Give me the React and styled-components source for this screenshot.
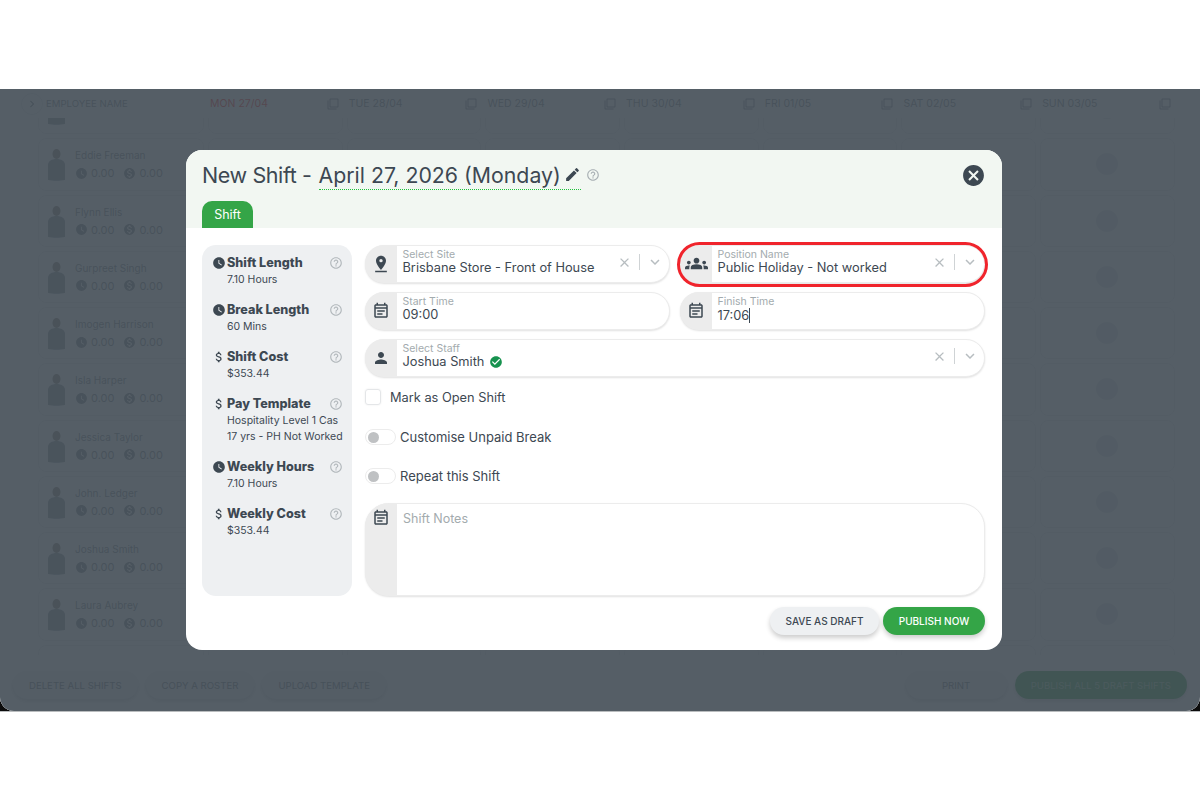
import React from "react";
import styled, { createGlobalStyle } from "styled-components";
import {
  MdAttachMoney,
  MdCancel,
  MdCheckCircle,
  MdClose,
  MdEdit,
  MdGroups,
  MdHelpOutline,
  MdKeyboardArrowDown,
  MdKeyboardArrowRight,
  MdMonetizationOn,
  MdOutlineEventNote,
  MdOutlineFilterNone,
  MdPerson,
  MdPinDrop,
  MdWatchLater,
} from "react-icons/md";

const GlobalStyle = createGlobalStyle`
  html, body {
    margin: 0;
    padding: 0;
    background: #fff;
  }
  * {
    box-sizing: border-box;
  }
  body {
    font-family: "Inter", "Noto Sans", "Liberation Sans", sans-serif;
    color: #3d4852;
  }
`;

const Page = styled.div`
  width: 1200px;
  height: 800px;
  padding-top: 89px;
  overflow: hidden;
`;
const Shell = styled.div`
  height: 623px;
  background: #0c0c0c;
  border-bottom: 1px solid #b9bcbe;
`;
const Screen = styled.div`
  position: relative;
  height: 622px;
  background: #fff;
  border-radius: 0 0 14px 14px;
  overflow: hidden;
  display: flex;
  flex-direction: column;
`;

const HeadRow = styled.div`
  height: 29px;
  flex: none;
  display: flex;
  align-items: center;
  padding-left: 21px;
  font-size: 10.5px;
  color: #7c848b;
`;
const Collapse = styled.div`
  width: 22px;
  height: 22px;
  margin-right: 3px;
  border-radius: 50%;
  border: 1px solid #e4e6e8;
  display: flex;
  align-items: center;
  justify-content: center;
  font-size: 14px;
`;
const NameHead = styled.div`
  width: 164px;
  font-size: 9.6px;
`;
const DayHead = styled.div`
  width: 138.7px;
  padding-right: 10px;
  display: flex;
  align-items: center;
  justify-content: space-between;
  color: ${(p) => (p.$today ? "#ff1a1a" : "#7c848b")};
  svg {
    font-size: 12px;
    color: #7c848b;
  }
`;

const Scroller = styled.div`
  flex: 1;
  overflow: hidden;
  padding-left: 38px;
`;
const RowList = styled.div`
  display: flex;
  flex-direction: column;
  gap: 4px;
  margin-top: -36px;
`;
const Row = styled.div`
  display: flex;
  gap: 4px;
  height: 52.25px;
  flex: none;
`;
const Card = styled.div`
  width: 166px;
  flex: none;
  border: 1px solid #e8eaec;
  border-radius: 8px;
  display: flex;
  align-items: center;
  padding-left: 3px;
  gap: 4px;
  color: #7c848b;
`;
const Cell = styled.div`
  width: 134.7px;
  flex: none;
  border: 1px solid #e8eaec;
  border-radius: 8px;
  display: flex;
  align-items: center;
  justify-content: center;
`;
const AddDot = styled.span`
  width: 22px;
  height: 22px;
  border-radius: 50%;
  background: #dfe2e5;
`;
const Person = styled.div`
  font-size: 10px;
  line-height: 14px;
`;
const Stats = styled.div`
  display: flex;
  align-items: center;
  gap: 3px;
  margin-top: 4px;
  font-size: 11px;
  svg {
    font-size: 13px;
  }
  span {
    margin-right: 6px;
  }
`;

const BottomBar = styled.div`
  height: 56px;
  flex: none;
  background: #fff;
  display: flex;
  align-items: center;
  justify-content: space-between;
  padding: 4px 13px 0 13px;
`;
const BarGroup = styled.div`
  display: flex;
  gap: 8px;
`;
const BarButton = styled.div`
  height: 28px;
  padding: 0 16px;
  min-width: ${(p) => p.$min || 0}px;
  border-radius: 14px;
  display: flex;
  align-items: center;
  justify-content: center;
  font-size: 9.6px;
  background: ${(p) => (p.$green ? "#34a547" : "#eef0f2")};
  color: ${(p) => (p.$green ? "#9ad3a3" : "#6c757c")};
  box-shadow: 0 2px 4px rgba(0, 0, 0, 0.2);
`;

const Backdrop = styled.div`
  position: absolute;
  inset: 0;
  background: rgba(66, 76, 85, 0.9);
  display: flex;
  align-items: center;
  justify-content: center;
  padding-right: 12px;
`;
const Modal = styled.div`
  width: 816px;
  height: 500px;
  background: #fff;
  border-radius: 16px;
  overflow: hidden;
  display: flex;
  flex-direction: column;
`;
const ModalHeader = styled.div`
  height: 78px;
  flex: none;
  background: #f2f7f2;
  padding: 10px 16px 0 16px;
  display: flex;
  flex-direction: column;
  justify-content: space-between;
`;
const TitleRow = styled.div`
  display: flex;
  align-items: center;
  height: 30px;
`;
const Title = styled.h1`
  margin: 0;
  font-size: 21.5px;
  font-weight: 400;
  letter-spacing: -0.4px;
  color: #3d4852;
  white-space: nowrap;
`;
const DateLink = styled.span`
  display: inline-flex;
  align-items: center;
  height: 30px;
  margin-left: 7px;
  border-bottom: 1px dotted #1fc23a;
  font-size: 21.3px;
  color: #3d4852;
  svg {
    font-size: 17px;
    margin-left: 3px;
  }
`;
const TitleHelp = styled.span`
  display: flex;
  margin-left: 5px;
  font-size: 14px;
  color: #a9b0b4;
`;
const CloseButton = styled.span`
  display: flex;
  margin-left: auto;
  font-size: 25px;
  color: #3d4852;
`;
const Tab = styled.div`
  width: 51px;
  height: 27px;
  background: #34a547;
  color: #fff;
  font-size: 12.5px;
  border-radius: 10px 10px 0 0;
  display: flex;
  align-items: center;
  justify-content: center;
`;

const ModalBody = styled.div`
  flex: 1;
  display: flex;
  gap: 13px;
  padding: 17px 17px 0 16px;
`;
const Sidebar = styled.div`
  width: 150px;
  height: 351px;
  flex: none;
  background: #eef0f2;
  border-radius: 14px;
  padding: 9px 9px 0 10px;
`;
const Stat = styled.div`
  display: grid;
  grid-template-columns: 15px 1fr 14px;
  align-content: start;
  padding-bottom: 13.5px;
`;
const StatIcon = styled.span`
  display: flex;
  align-items: center;
  height: 18px;
  font-size: 14px;
  color: #3d4852;
`;
const StatTitle = styled.div`
  height: 18px;
  line-height: 18px;
  font-size: 12.6px;
  font-weight: 800;
  color: #3d4852;
  white-space: nowrap;
`;
const StatHelp = styled.span`
  display: flex;
  align-items: center;
  height: 18px;
  font-size: 14px;
  color: #b2b8bc;
`;
const StatText = styled.div`
  grid-column: 2 / 4;
  font-size: 10.5px;
  line-height: 15.5px;
  color: #3d4852;
  white-space: nowrap;
`;

const Form = styled.div`
  width: 620px;
  display: flex;
  flex-direction: column;
`;
const FieldRow = styled.div`
  display: flex;
  gap: 10px;
  margin-bottom: ${(p) => p.$gap ?? 9.5}px;
`;
const Field = styled.div`
  position: relative;
  flex: 1;
  height: ${(p) => p.$height || 37.5}px;
  display: flex;
  border-radius: ${(p) => (p.$height ? 24 : 19)}px;
  border: 1px solid #ececec;
  box-shadow: 0 1px 2px rgba(0, 0, 0, 0.12);
  background: #fff;
  ${(p) =>
    p.$highlight &&
    `&::after {
      content: "";
      position: absolute;
      inset: -4px -4px -5px -4px;
      border: 3px solid #f0242c;
      border-radius: 24px;
    }`}
`;
const FieldIcon = styled.div`
  width: 32px;
  flex: none;
  margin: -1px 0 -1px -1px;
  background: #ececec;
  border-radius: ${(p) => (p.$top ? "24px 0 0 24px" : "19px 0 0 19px")};
  display: flex;
  justify-content: center;
  align-items: ${(p) => (p.$top ? "flex-start" : "center")};
  padding-top: ${(p) => (p.$top ? 6 : 0)}px;
  font-size: ${(p) => p.$size || 18}px;
  color: #3d4852;
`;
const FieldBody = styled.div`
  flex: 1;
  padding: 3px 0 0 5.5px;
  min-width: 0;
`;
const FieldLabel = styled.div`
  font-size: 10.5px;
  line-height: 12px;
  color: #a3abae;
`;
const FieldValue = styled.div`
  display: flex;
  align-items: center;
  gap: 5px;
  font-size: 12.8px;
  line-height: 14px;
  color: #3d4852;
  white-space: nowrap;
  svg {
    font-size: 14px;
    color: #17924f;
  }
`;
const Caret = styled.span`
  width: 1px;
  height: 15px;
  margin-left: -5px;
  background: #3d4852;
`;
const NotesHint = styled.div`
  padding: 7px 0 0 6px;
  font-size: 12.5px;
  color: #a3abae;
`;
const Controls = styled.div`
  display: flex;
  align-items: center;
  margin: -3px 5px 0 0;
  color: #b7bdc0;
`;
const ClearIcon = styled.span`
  display: flex;
  font-size: 15px;
`;
const Divider = styled.span`
  width: 1px;
  height: 16px;
  margin: 0 6px 0 7px;
  background: #cfd3d5;
`;
const DownIcon = styled.span`
  display: flex;
  font-size: 18px;
`;
const CheckLine = styled.label`
  display: flex;
  align-items: center;
  gap: 9px;
  height: 16px;
  margin-bottom: 24px;
  font-size: 12.8px;
`;
const CheckBox = styled.span`
  width: 16px;
  height: 16px;
  border: 1px solid #e4e6e8;
  border-radius: 3px;
  box-shadow: 0 0 2px rgba(0, 0, 0, 0.08);
`;
const ToggleLine = styled.div`
  display: flex;
  align-items: center;
  gap: 4px;
  height: 16px;
  margin-bottom: ${(p) => p.$gap}px;
  font-size: 13px;
`;
const Toggle = styled.span`
  width: 31px;
  height: 16px;
  border: 1px solid #ececec;
  border-radius: 8px;
  padding: 1.5px 0 0 2px;
  &::before {
    content: "";
    display: block;
    width: 11px;
    height: 11px;
    border-radius: 50%;
    background: #bfc1c3;
  }
`;
const Actions = styled.div`
  display: flex;
  justify-content: flex-end;
  gap: 4px;
  margin-top: 11px;
`;
const ActionButton = styled.button`
  height: 28px;
  width: ${(p) => p.$width}px;
  padding: 0;
  border: 0;
  border-radius: 14px;
  font-family: inherit;
  font-size: 10px;
  font-weight: 500;
  background: ${(p) => (p.$primary ? "#34a547" : "#eef0f2")};
  color: ${(p) => (p.$primary ? "#fff" : "#3d4852")};
  box-shadow: 0 3px 5px rgba(0, 0, 0, 0.2);
`;

const days = [
  { label: "MON 27/04", today: true },
  { label: "TUE 28/04" },
  { label: "WED 29/04" },
  { label: "THU 30/04" },
  { label: "FRI 01/05" },
  { label: "SAT 02/05" },
  { label: "SUN 03/05" },
];
const staff = [
  "",
  "Eddie Freeman",
  "Flynn Ellis",
  "Gurpreet Singh",
  "Imogen Harrison",
  "Isla Harper",
  "Jessica Taylor",
  "John. Ledger",
  "Joshua Smith",
  "Laura Aubrey",
  "",
];
const stats = [
  { Icon: MdWatchLater, title: "Shift Length", text: ["7.10 Hours"] },
  { Icon: MdWatchLater, title: "Break Length", text: ["60 Mins"] },
  { Icon: MdAttachMoney, title: "Shift Cost", text: ["$353.44"] },
  {
    Icon: MdAttachMoney,
    title: "Pay Template",
    text: ["Hospitality Level 1 Cas", "17 yrs - PH Not Worked"],
  },
  { Icon: MdWatchLater, title: "Weekly Hours", text: ["7.10 Hours"] },
  { Icon: MdAttachMoney, title: "Weekly Cost", text: ["$353.44"] },
];

const Avatar = () => (
  <svg width="29" height="36" viewBox="0 0 29 36">
    <ellipse cx="14.5" cy="8" rx="4" ry="5" fill="#8d8178" />
    <path d="M6 34V19c0-4 4-6 8.5-6s8.5 2 8.5 6v15c-5 1-12 1-17 0z" fill="#8a949c" />
  </svg>
);

const Controlled = () => (
  <Controls>
    <ClearIcon>
      <MdClose />
    </ClearIcon>
    <Divider />
    <DownIcon>
      <MdKeyboardArrowDown />
    </DownIcon>
  </Controls>
);

const App = () => {
  return (
    <Page>
      <GlobalStyle />
      <Shell>
        <Screen>
          <HeadRow>
            <Collapse>
              <MdKeyboardArrowRight />
            </Collapse>
            <NameHead>EMPLOYEE NAME</NameHead>
            {days.map((day) => (
              <DayHead key={day.label} $today={day.today}>
                {day.label}
                <MdOutlineFilterNone />
              </DayHead>
            ))}
          </HeadRow>
          <Scroller>
            <RowList>
              {staff.map((name, i) => (
                <Row key={i}>
                  <Card>
                    <Avatar />
                    {name && (
                      <Person>
                        {name}
                        <Stats>
                          <MdWatchLater />
                          <span>0.00</span>
                          <MdMonetizationOn />
                          <span>0.00</span>
                        </Stats>
                      </Person>
                    )}
                  </Card>
                  {days.map((day, d) => (
                    <Cell key={day.label}>{d === 6 && <AddDot />}</Cell>
                  ))}
                </Row>
              ))}
            </RowList>
          </Scroller>
          <BottomBar>
            <BarGroup>
              <BarButton>DELETE ALL SHIFTS</BarButton>
              <BarButton>COPY A ROSTER</BarButton>
              <BarButton>UPLOAD TEMPLATE</BarButton>
            </BarGroup>
            <BarGroup>
              <BarButton $min={101}>PRINT</BarButton>
              <BarButton $green>PUBLISH ALL 5 DRAFT SHIFTS</BarButton>
            </BarGroup>
          </BottomBar>

          <Backdrop>
            <Modal>
              <ModalHeader>
                <TitleRow>
                  <Title>New Shift -</Title>
                  <DateLink>
                    April 27, 2026 (Monday)
                    <MdEdit />
                  </DateLink>
                  <TitleHelp>
                    <MdHelpOutline />
                  </TitleHelp>
                  <CloseButton>
                    <MdCancel />
                  </CloseButton>
                </TitleRow>
                <Tab>Shift</Tab>
              </ModalHeader>
              <ModalBody>
                <Sidebar>
                  {stats.map(({ Icon, title, text }) => (
                    <Stat key={title}>
                      <StatIcon>
                        <Icon />
                      </StatIcon>
                      <StatTitle>{title}</StatTitle>
                      <StatHelp>
                        <MdHelpOutline />
                      </StatHelp>
                      <StatText>
                        {text.map((line) => (
                          <div key={line}>{line}</div>
                        ))}
                      </StatText>
                    </Stat>
                  ))}
                </Sidebar>
                <Form>
                  <FieldRow>
                    <Field>
                      <FieldIcon $size={20}>
                        <MdPinDrop />
                      </FieldIcon>
                      <FieldBody>
                        <FieldLabel>Select Site</FieldLabel>
                        <FieldValue>Brisbane Store - Front of House</FieldValue>
                      </FieldBody>
                      <Controlled />
                    </Field>
                    <Field $highlight>
                      <FieldIcon $size={23}>
                        <MdGroups />
                      </FieldIcon>
                      <FieldBody>
                        <FieldLabel>Position Name</FieldLabel>
                        <FieldValue>Public Holiday - Not worked</FieldValue>
                      </FieldBody>
                      <Controlled />
                    </Field>
                  </FieldRow>
                  <FieldRow>
                    <Field>
                      <FieldIcon>
                        <MdOutlineEventNote />
                      </FieldIcon>
                      <FieldBody>
                        <FieldLabel>Start Time</FieldLabel>
                        <FieldValue>09:00</FieldValue>
                      </FieldBody>
                    </Field>
                    <Field>
                      <FieldIcon>
                        <MdOutlineEventNote />
                      </FieldIcon>
                      <FieldBody>
                        <FieldLabel>Finish Time</FieldLabel>
                        <FieldValue>
                          17:06
                          <Caret />
                        </FieldValue>
                      </FieldBody>
                    </Field>
                  </FieldRow>
                  <FieldRow $gap={12.5}>
                    <Field>
                      <FieldIcon>
                        <MdPerson />
                      </FieldIcon>
                      <FieldBody>
                        <FieldLabel>Select Staff</FieldLabel>
                        <FieldValue>
                          Joshua Smith
                          <MdCheckCircle />
                        </FieldValue>
                      </FieldBody>
                      <Controlled />
                    </Field>
                  </FieldRow>
                  <CheckLine>
                    <CheckBox />
                    Mark as Open Shift
                  </CheckLine>
                  <ToggleLine $gap={23}>
                    <Toggle />
                    Customise Unpaid Break
                  </ToggleLine>
                  <ToggleLine $gap={19}>
                    <Toggle />
                    Repeat this Shift
                  </ToggleLine>
                  <FieldRow $gap={0}>
                    <Field $height={93}>
                      <FieldIcon $top>
                        <MdOutlineEventNote />
                      </FieldIcon>
                      <NotesHint>Shift Notes</NotesHint>
                    </Field>
                  </FieldRow>
                  <Actions>
                    <ActionButton $width={109}>SAVE AS DRAFT</ActionButton>
                    <ActionButton $primary $width={102}>
                      PUBLISH NOW
                    </ActionButton>
                  </Actions>
                </Form>
              </ModalBody>
            </Modal>
          </Backdrop>
        </Screen>
      </Shell>
    </Page>
  );
};

export default App;
